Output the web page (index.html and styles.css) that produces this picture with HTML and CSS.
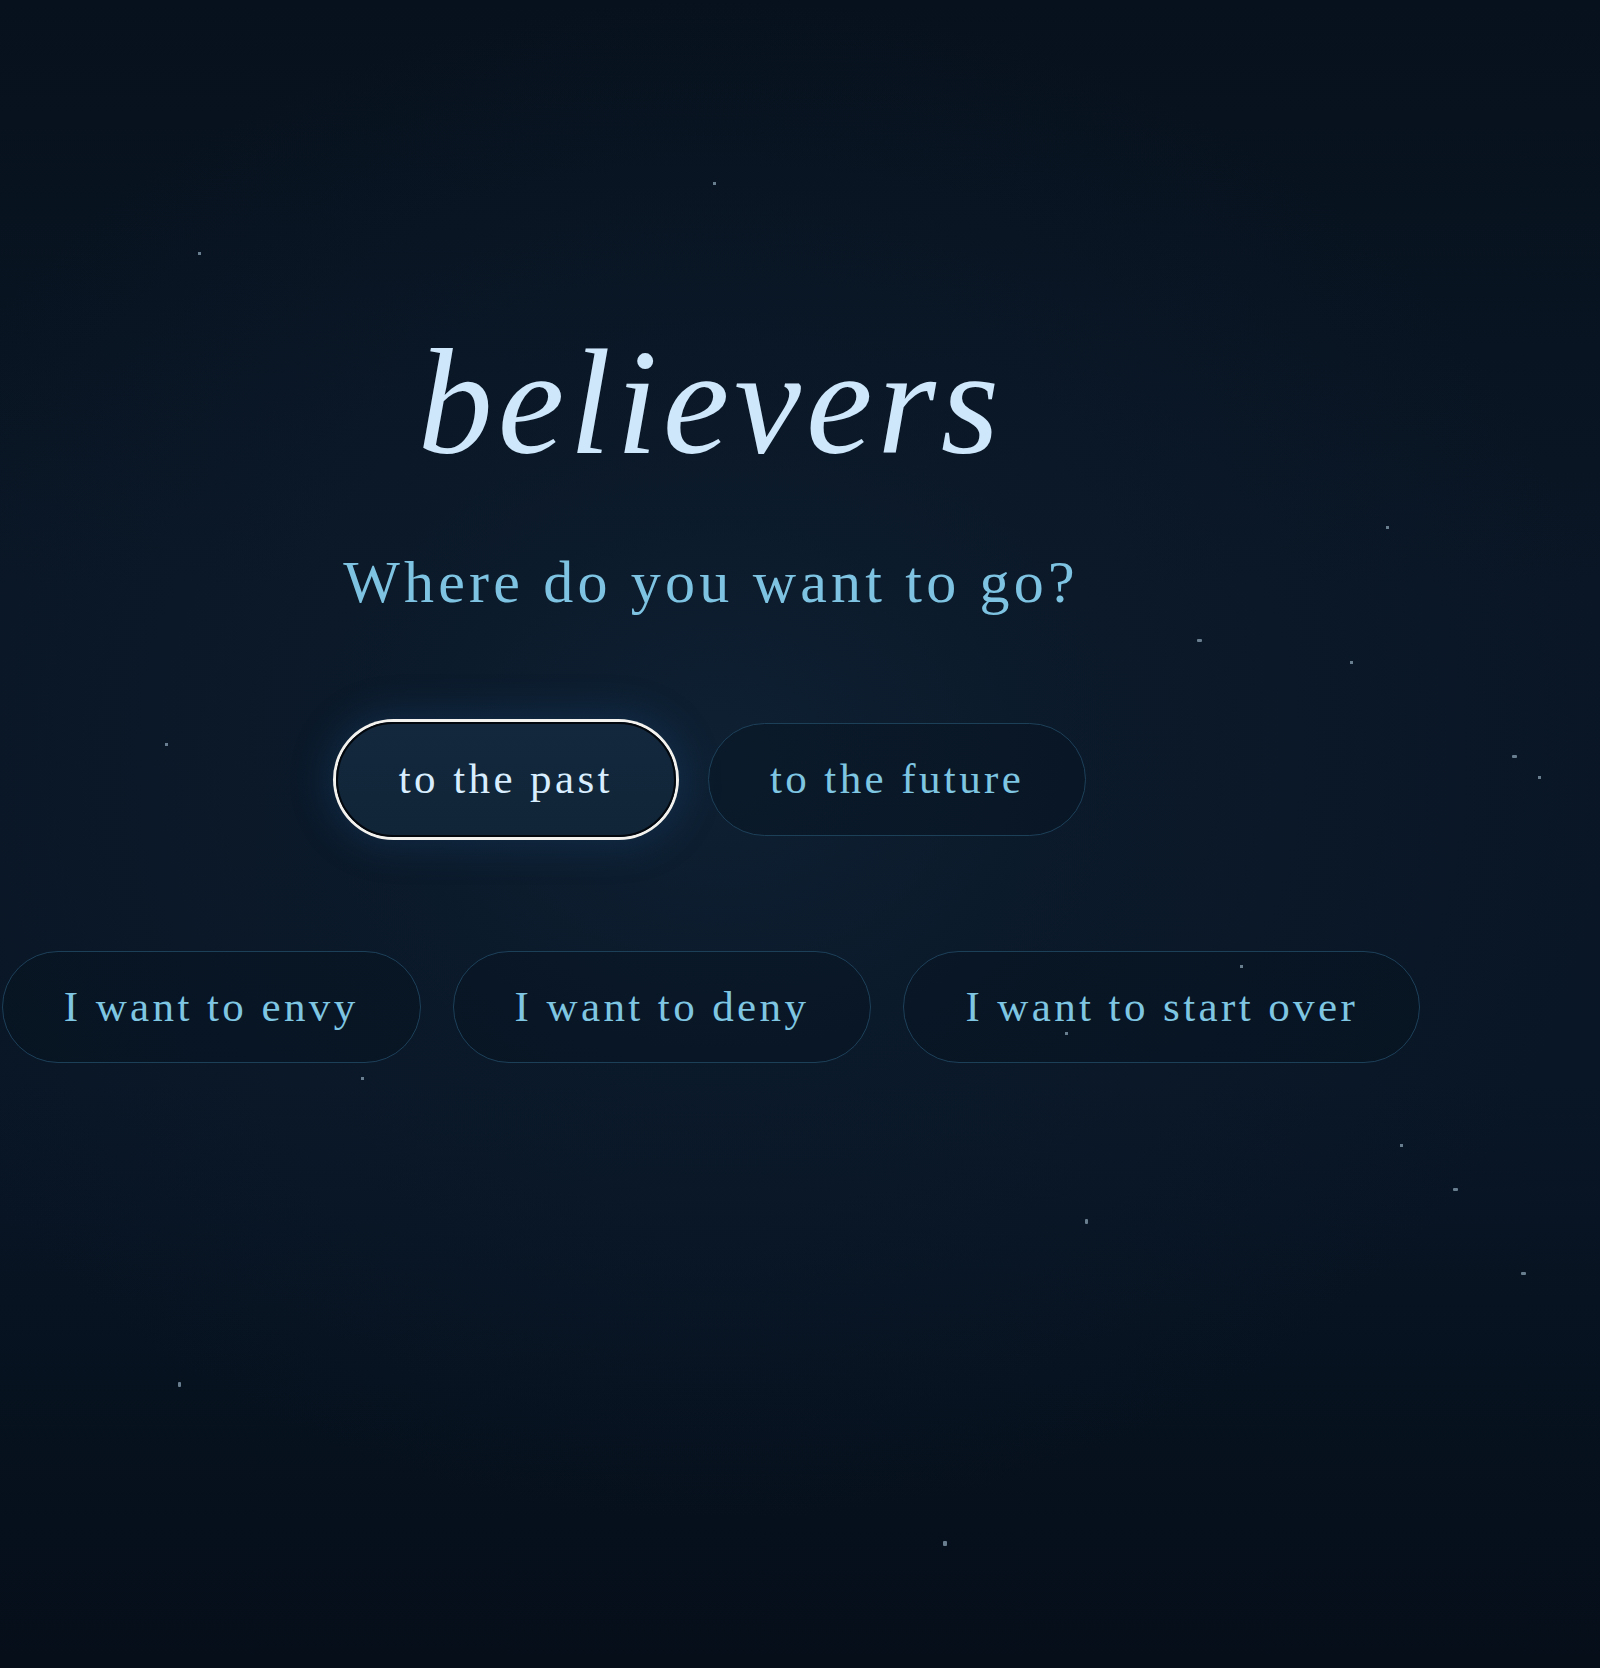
FILE: index.html
```html
<!DOCTYPE html>
<html lang="en">
<head>
<meta charset="utf-8">
<title>believers</title>
<link rel="stylesheet" href="styles.css">
</head>
<body>
<div class="sky">
  <div class="stars" aria-hidden="true">
    <span class="star" style="left:713px;top:182px"></span>
    <span class="star" style="left:198px;top:252px"></span>
    <span class="star" style="left:1386px;top:526px"></span>
    <span class="star wide" style="left:1197px;top:639px"></span>
    <span class="star" style="left:1350px;top:661px"></span>
    <span class="star" style="left:165px;top:743px"></span>
    <span class="star wide" style="left:1512px;top:755px"></span>
    <span class="star" style="left:1538px;top:776px"></span>
    <span class="star" style="left:1240px;top:965px"></span>
    <span class="star" style="left:1065px;top:1032px"></span>
    <span class="star" style="left:361px;top:1077px"></span>
    <span class="star" style="left:1400px;top:1144px"></span>
    <span class="star wide" style="left:1453px;top:1188px"></span>
    <span class="star tall" style="left:1085px;top:1219px"></span>
    <span class="star wide" style="left:1521px;top:1272px"></span>
    <span class="star tall" style="left:178px;top:1382px"></span>
    <span class="star big" style="left:943px;top:1541px"></span>
  </div>
  <main class="stage">
    <h1 class="title">believers</h1>
    <p class="prompt">Where do you want to go?</p>
    <div class="choices primary">
      <button class="choice active">to the past</button>
      <button class="choice">to the future</button>
    </div>
    <div class="choices secondary">
      <button class="choice">I want to envy</button>
      <button class="choice">I want to deny</button>
      <button class="choice">I want to start over</button>
    </div>
  </main>
</div>
</body>
</html>
```
FILE: styles.css
```css
html, body {
  margin: 0;
  padding: 0;
}
body {
  width: 1600px;
  height: 1668px;
  overflow: hidden;
  background: #060f1a;
  font-family: "Liberation Serif", "DejaVu Serif", serif;
}
.sky {
  position: relative;
  width: 1600px;
  height: 1668px;
  background:
    radial-gradient(ellipse 900px 760px at 720px 760px, rgba(16, 36, 56, 0.7) 0%, rgba(12, 28, 45, 0.5) 45%, rgba(8, 18, 30, 0) 100%),
    linear-gradient(180deg, #07111d 0%, #0a1625 35%, #091626 65%, #050e19 100%);
}
.stars {
  position: absolute;
  inset: 0;
  pointer-events: none;
}
.star {
  position: absolute;
  width: 3px;
  height: 3px;
  background: #8198aa;
  opacity: 0.8;
}
.star.wide { width: 5px; height: 3px; border-radius: 1px; }
.star.tall { width: 3px; height: 5px; border-radius: 1px; }
.star.big { width: 4px; height: 5px; border-radius: 1px; }
.stage {
  width: 1422px;
  padding-top: 327px;
  display: flex;
  flex-direction: column;
  align-items: center;
}
.title {
  margin: 0;
  font-size: 150px;
  line-height: 1;
  font-weight: 400;
  font-style: italic;
  letter-spacing: 5px;
  color: #cfe7fb;
}
.prompt {
  margin: 75px 0 0;
  font-size: 60px;
  line-height: 1;
  letter-spacing: 4.2px;
  color: #7ec4e2;
}
.choices {
  display: flex;
  align-items: center;
  gap: 32px;
  white-space: nowrap;
}
.primary {
  margin-top: 110px;
}
.secondary {
  margin-top: 114px;
}
.choice {
  flex-shrink: 0;
  margin: 0;
  padding: 30px 61px;
  border: 1px solid #1d4059;
  border-radius: 60px;
  background: rgba(6, 16, 28, 0.35);
  color: #7fc6e2;
  font-family: "Liberation Serif", "DejaVu Serif", serif;
  font-size: 43px;
  line-height: 1.18;
  letter-spacing: 3.4px;
  white-space: nowrap;
  cursor: pointer;
}
.choice.active {
  border: 2px solid #03080e;
  background: linear-gradient(180deg, #13283d 0%, #112538 100%);
  color: #d8eeff;
  box-shadow: 0 0 0 3px #f3f2ee, 0 0 36px 10px rgba(30, 80, 130, 0.28);
}
```
